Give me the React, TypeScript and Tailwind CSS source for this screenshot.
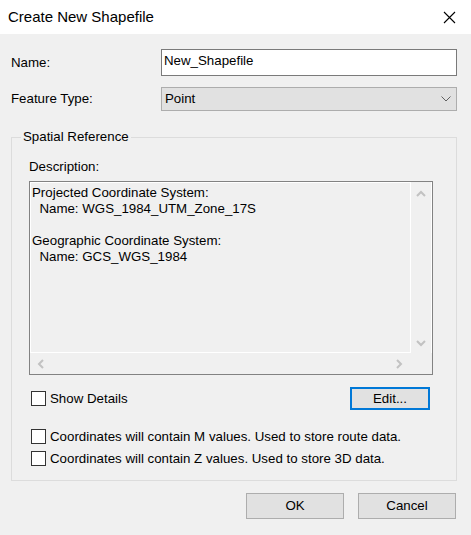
const TEXT = 'text-[#000]'

function Check({ label }: { label: string }) {
  return (
    <label className="flex items-center gap-[4px] h-[15px]">
      <span className="w-[15px] h-[15px] border border-[#333] bg-white shrink-0" />
      <span className="leading-[16px] whitespace-nowrap">{label}</span>
    </label>
  )
}

function Chevron({ dir, className }: { dir: 'up' | 'down' | 'left' | 'right'; className?: string }) {
  const d =
    dir === 'up'
      ? 'M1 6 L5 2 L9 6'
      : dir === 'down'
        ? 'M1 2 L5 6 L9 2'
        : dir === 'left'
          ? 'M6 1 L2 5 L6 9'
          : 'M2 1 L6 5 L2 9'
  const w = dir === 'up' || dir === 'down' ? 10 : 8
  const h = dir === 'up' || dir === 'down' ? 8 : 10
  return (
    <svg width={w} height={h} viewBox={`0 0 ${w} ${h}`} className={className}>
      <path d={d} fill="none" stroke="#c2c2c2" strokeWidth="2" />
    </svg>
  )
}

export default function App() {
  return (
    <div
      className={`w-[471px] h-[535px] bg-[#f0f0f0] ${TEXT} text-[13.3px] font-['Liberation_Sans',Arial,sans-serif] overflow-hidden`}
    >
      {/* title bar */}
      <div className="h-[34px] bg-white flex items-center justify-between pl-[8px] pr-[15px]">
        <span className="text-[15px] leading-[20px]">Create New Shapefile</span>
        <svg width="13" height="13" viewBox="0 0 13 13">
          <path d="M1 1 L12 12 M12 1 L1 12" stroke="#000" strokeWidth="1.1" />
        </svg>
      </div>

      <div className="pt-[15px]">
        <div className="flex items-center pl-[11px] h-[27px]">
          <span className="w-[150px]">Name:</span>
          <div className="w-[296px] h-[27px] border border-[#7a7a7a] bg-white flex items-start pl-[2px] pt-[3px] leading-[16px]">
            New_Shapefile
          </div>
        </div>

        <div className="flex items-center pl-[11px] mt-[11px] h-[24px]">
          <span className="w-[150px]">Feature Type:</span>
          <div className="w-[296px] h-[24px] border border-[#adadad] bg-[#e1e1e1] flex items-center justify-between pl-[3px] pr-[5px]">
            <span>Point</span>
            <svg width="10" height="6" viewBox="0 0 10 6">
              <path d="M0.5 0.5 L5 5 L9.5 0.5" fill="none" stroke="#606060" strokeWidth="1" />
            </svg>
          </div>
        </div>

        <fieldset className="ml-[11px] mt-[18px] w-[446px] border border-[#dcdcdc] pl-[17px] pb-[14px]">
          <legend className="-ml-[8px] px-[2px] leading-[16px]">Spatial Reference</legend>

          <div className="pt-[14px] leading-[16px]">Description:</div>

          <div className="mt-[6px] w-[404px] h-[194px] border border-[#828282] grid grid-cols-[1fr_21px] grid-rows-[1fr_21px]">
            <div className="border border-white pl-[1px] pt-[2px] leading-[16px] whitespace-pre">
              {'Projected Coordinate System:\n  Name: WGS_1984_UTM_Zone_17S\n\nGeographic Coordinate System:\n  Name: GCS_WGS_1984'}
            </div>
            <div className="border-r border-white flex flex-col items-center justify-between pt-[8px] pb-[6px]">
              <Chevron dir="up" />
              <Chevron dir="down" />
            </div>
            <div className="flex items-center justify-between pl-[7px] pr-[8px]">
              <Chevron dir="left" />
              <Chevron dir="right" />
            </div>
            <div />
          </div>

          <div className="mt-[12px] w-[404px] h-[23px] flex items-center justify-between pl-[2px] pr-[3px]">
            <Check label="Show Details" />
            <button className="w-[80px] h-[23px] border-2 border-[#0078d7] bg-[#e1e1e1] leading-[16px]">
              Edit...
            </button>
          </div>

          <div className="mt-[19px] pl-[2px]">
            <Check label="Coordinates will contain M values. Used to store route data." />
          </div>
          <div className="mt-[7px] pl-[2px]">
            <Check label="Coordinates will contain Z values. Used to store 3D data." />
          </div>
        </fieldset>

        <div className="mt-[12px] flex justify-end gap-[14px] pr-[15px]">
          <button className="w-[98px] h-[26px] border border-[#adadad] bg-[#e1e1e1]">OK</button>
          <button className="w-[98px] h-[26px] border border-[#adadad] bg-[#e1e1e1]">Cancel</button>
        </div>
      </div>
    </div>
  )
}
